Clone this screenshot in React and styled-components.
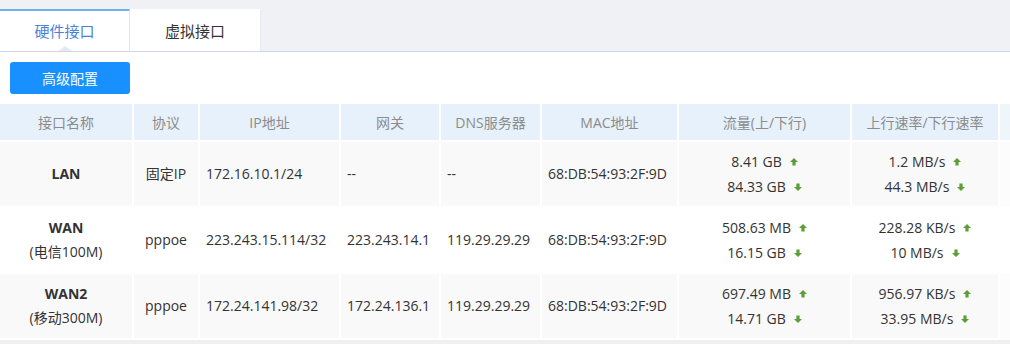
import React from "react";
import styled, { createGlobalStyle } from "styled-components";

const Global = createGlobalStyle`
  html, body { margin: 0; padding: 0; background: #fff; }
  body { font-family: "Open Sans", "Noto Sans CJK SC", sans-serif; font-size: 14px; color: #333; overflow: hidden; }
  * { box-sizing: border-box; }
`;

const Page = styled.div`
  width: 1010px;
  height: 344px;
  overflow: hidden;
`;

const TabBar = styled.div`
  height: 52px;
  background: #eff1f5;
  padding-top: 9px;
  display: flex;
  align-items: stretch;
  border-bottom: 1px solid #cdd6ee;
`;

const Tab = styled.div`
  position: relative;
  width: ${(p) => (p.$active ? "130px" : "131px")};
  background: #fff;
  display: flex;
  align-items: center;
  justify-content: center;
  font-size: 15px;
  color: ${(p) => (p.$active ? "#4a7fdc" : "#333")};
  border-top: 2px solid ${(p) => (p.$active ? "#6fb3ec" : "#fff")};
  border-right: 1px solid ${(p) => (p.$active ? "#e3e7ef" : "#e8ebf1")};
  padding-bottom: 2px;
  &::after {
    content: "";
    display: ${(p) => (p.$active ? "block" : "none")};
    position: absolute;
    left: 50%;
    bottom: 0;
    margin-left: -7px;
    border-left: 7px solid transparent;
    border-right: 7px solid transparent;
    border-bottom: 5px solid #e6e9f0;
  }
`;

const Content = styled.div`
  padding-top: 10px;
`;

const Toolbar = styled.div`
  padding: 0 10px 10px;
`;

const Button = styled.button`
  width: 120px;
  height: 32px;
  border: none;
  border-radius: 3px;
  background: #1890ff;
  color: #fff;
  font-family: inherit;
  font-size: 14px;
  cursor: pointer;
`;

const Table = styled.div`
  display: grid;
  grid-template-columns: 132px 64px 139px 98px 99px 135px 171px 146px 100px;
  grid-auto-rows: 64px;
  grid-template-rows: 36px;
  column-gap: 2px;
  row-gap: 2px;
  width: 1100px;
  padding-bottom: 2px;
  border-bottom: 4px solid #f0f0f0;
`;

const HeadCell = styled.div`
  background: ${(p) => (p.$fade ? "#eef5fb" : "#e6f1fb")};
  color: #8c8c8c;
  display: flex;
  align-items: center;
  justify-content: center;
  font-size: 14px;
`;

const Cell = styled.div`
  background: ${(p) => (p.$fade ? (p.$odd ? "#fcfcfc" : "#fff") : p.$odd ? "#f9f9f9" : "#fff")};
  display: flex;
  flex-direction: column;
  justify-content: center;
  align-items: ${(p) => (p.$left ? "flex-start" : "center")};
  padding-left: ${(p) => (p.$left ? "6px" : "0")};
  line-height: 24px;
  white-space: nowrap;
`;

const Name = styled.span`
  font-weight: 700;
  font-size: 14px;
`;

const Sub = styled.span`
  font-size: 14px;
`;

const Flow = styled.div`
  display: flex;
  align-items: center;
  line-height: 25px;
`;

const ArrowIcon = styled.svg`
  width: 8px;
  height: 8px;
  margin-left: 8px;
  flex: none;
`;

const Arrow = ({ down }) => (
  <ArrowIcon viewBox="0 0 8 8">
    <path
      d={down ? "M4 8 L8 4 H5.6 V0.5 H2.4 V4 H0 Z" : "M4 0 L8 4 H5.6 V7.5 H2.4 V4 H0 Z"}
      fill="#5a9e36"
    />
  </ArrowIcon>
);

const headers = ["接口名称", "协议", "IP地址", "网关", "DNS服务器", "MAC地址", "流量(上/下行)", "上行速率/下行速率"];

const rows = [
  { name: "LAN", sub: null, proto: "固定IP", ip: "172.16.10.1/24", gw: "--", dns: "--", mac: "68:DB:54:93:2F:9D", up: "8.41 GB", down: "84.33 GB", rup: "1.2 MB/s", rdown: "44.3 MB/s" },
  { name: "WAN", sub: "(电信100M)", proto: "pppoe", ip: "223.243.15.114/32", gw: "223.243.14.1", dns: "119.29.29.29", mac: "68:DB:54:93:2F:9D", up: "508.63 MB", down: "16.15 GB", rup: "228.28 KB/s", rdown: "10 MB/s" },
  { name: "WAN2", sub: "(移动300M)", proto: "pppoe", ip: "172.24.141.98/32", gw: "172.24.136.1", dns: "119.29.29.29", mac: "68:DB:54:93:2F:9D", up: "697.49 MB", down: "14.71 GB", rup: "956.97 KB/s", rdown: "33.95 MB/s" },
];

export default function App() {
  return (
    <Page>
      <Global />
      <TabBar>
        <Tab $active>硬件接口</Tab>
        <Tab>虚拟接口</Tab>
      </TabBar>
      <Content>
        <Toolbar>
          <Button>高级配置</Button>
        </Toolbar>
        <Table>
          {headers.map((h) => (
            <HeadCell key={h}>{h}</HeadCell>
          ))}
          <HeadCell $fade />
          {rows.map((r, i) => {
            const odd = i % 2 === 0;
            return (
              <React.Fragment key={r.name}>
                <Cell $odd={odd}>
                  <Name>{r.name}</Name>
                  {r.sub && <Sub>{r.sub}</Sub>}
                </Cell>
                <Cell $odd={odd}>{r.proto}</Cell>
                <Cell $odd={odd} $left>{r.ip}</Cell>
                <Cell $odd={odd} $left>{r.gw}</Cell>
                <Cell $odd={odd} $left>{r.dns}</Cell>
                <Cell $odd={odd} $left>{r.mac}</Cell>
                <Cell $odd={odd}>
                  <Flow>{r.up}<Arrow /></Flow>
                  <Flow>{r.down}<Arrow down /></Flow>
                </Cell>
                <Cell $odd={odd}>
                  <Flow>{r.rup}<Arrow /></Flow>
                  <Flow>{r.rdown}<Arrow down /></Flow>
                </Cell>
                <Cell $odd={odd} $fade />
              </React.Fragment>
            );
          })}
        </Table>
      </Content>
    </Page>
  );
}
